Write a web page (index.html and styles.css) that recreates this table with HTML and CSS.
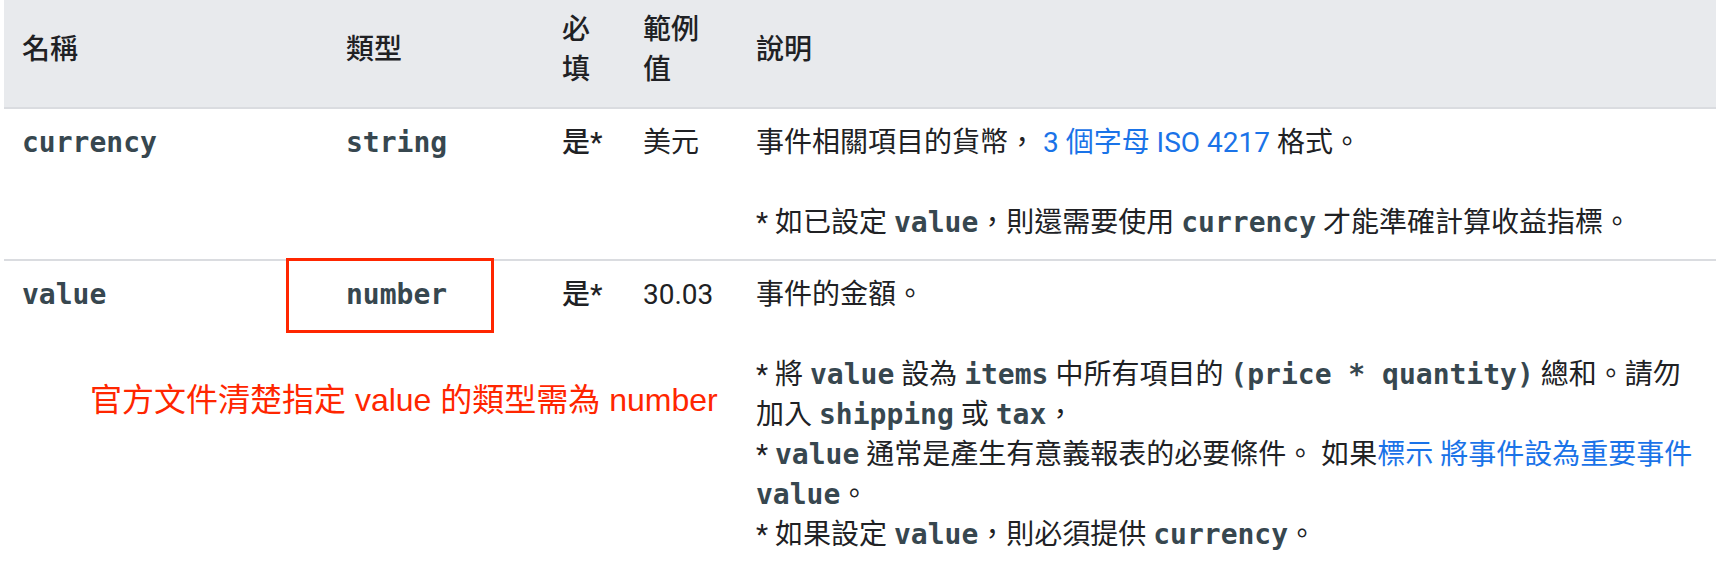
FILE: index.html
```html
<!DOCTYPE html>
<html lang="zh-Hant">
<head>
<meta charset="utf-8">
<title>參數</title>
<link rel="stylesheet" href="styles.css">
</head>
<body>
<div class="page">
  <table class="params">
    <colgroup>
      <col class="c-name">
      <col class="c-type">
      <col class="c-req">
      <col class="c-ex">
      <col class="c-desc">
    </colgroup>
    <thead>
      <tr>
        <th>名稱</th>
        <th>類型</th>
        <th>必填</th>
        <th>範例值</th>
        <th>說明</th>
      </tr>
    </thead>
    <tbody>
      <tr>
        <td><code>currency</code></td>
        <td><code>string</code></td>
        <td><strong>是*</strong></td>
        <td>美元</td>
        <td>
          <p>事件相關項目的貨幣， <a href="#">3 個字母 ISO 4217</a> 格式。</p>
          <p class="gap">* 如已設定 <code>value</code>，則還需要使用 <code>currency</code> 才能準確計算收益指標。</p>
        </td>
      </tr>
      <tr>
        <td><code>value</code></td>
        <td><code>number</code></td>
        <td><strong>是*</strong></td>
        <td>30.03</td>
        <td>
          <p>事件的金額。</p>
          <p class="gap">* 將 <code>value</code> 設為 <code>items</code> 中所有項目的 <code>(price * quantity)</code> 總和。請勿加入 <code>shipping</code> 或 <code>tax</code>，<br>* <code>value</code> 通常是產生有意義報表的必要條件。 如果<a href="#">標示 將事件設為重要事件</a> <code>value</code>。<br>* 如果設定 <code>value</code>，則必須提供 <code>currency</code>。</p>
        </td>
      </tr>
    </tbody>
  </table>
  <div class="mark-box"></div>
  <div class="mark-note">官方文件清楚指定 value 的類型需為 number</div>
</div>
</body>
</html>
```
FILE: styles.css
```css
html, body {
  margin: 0;
  padding: 0;
  background: #ffffff;
}

.page {
  position: relative;
  padding: 0 2px 0 4px;
  font-family: Roboto, "Noto Sans CJK TC", sans-serif;
  font-size: 28px;
  line-height: 40px;
  color: #202124;
}

.params {
  width: 1712px;
  table-layout: fixed;
  border-collapse: collapse;
}

.c-name { width: 324px; }
.c-type { width: 216px; }
.c-req { width: 81px; }
.c-ex { width: 113px; }
.c-desc { width: 978px; }

.params th {
  background: #e8eaed;
  text-align: left;
  font-weight: 500;
  vertical-align: middle;
  padding: 10px 18px 17px;
  border-bottom: 2px solid #dadce0;
}

.params td {
  vertical-align: top;
  padding: 14px 18px 16px;
  border-bottom: 2px solid #dadce0;
}

.params p {
  margin: 0;
}

.params p.gap {
  margin-top: 40px;
}

.params strong {
  font-weight: 500;
}

code {
  font-family: "DejaVu Sans Mono", monospace;
  font-size: 28px;
  font-weight: 700;
  color: #37474f;
}

a {
  color: #1a73e8;
  text-decoration: none;
}

.mark-box {
  position: absolute;
  left: 286px;
  top: 258px;
  width: 202px;
  height: 69px;
  border: 3px solid #ff2600;
}

.mark-note {
  position: absolute;
  left: 90px;
  top: 380px;
  font-family: "Liberation Sans", "Noto Sans CJK TC", sans-serif;
  font-size: 32px;
  line-height: 40px;
  color: #ff2600;
  white-space: nowrap;
}
```
